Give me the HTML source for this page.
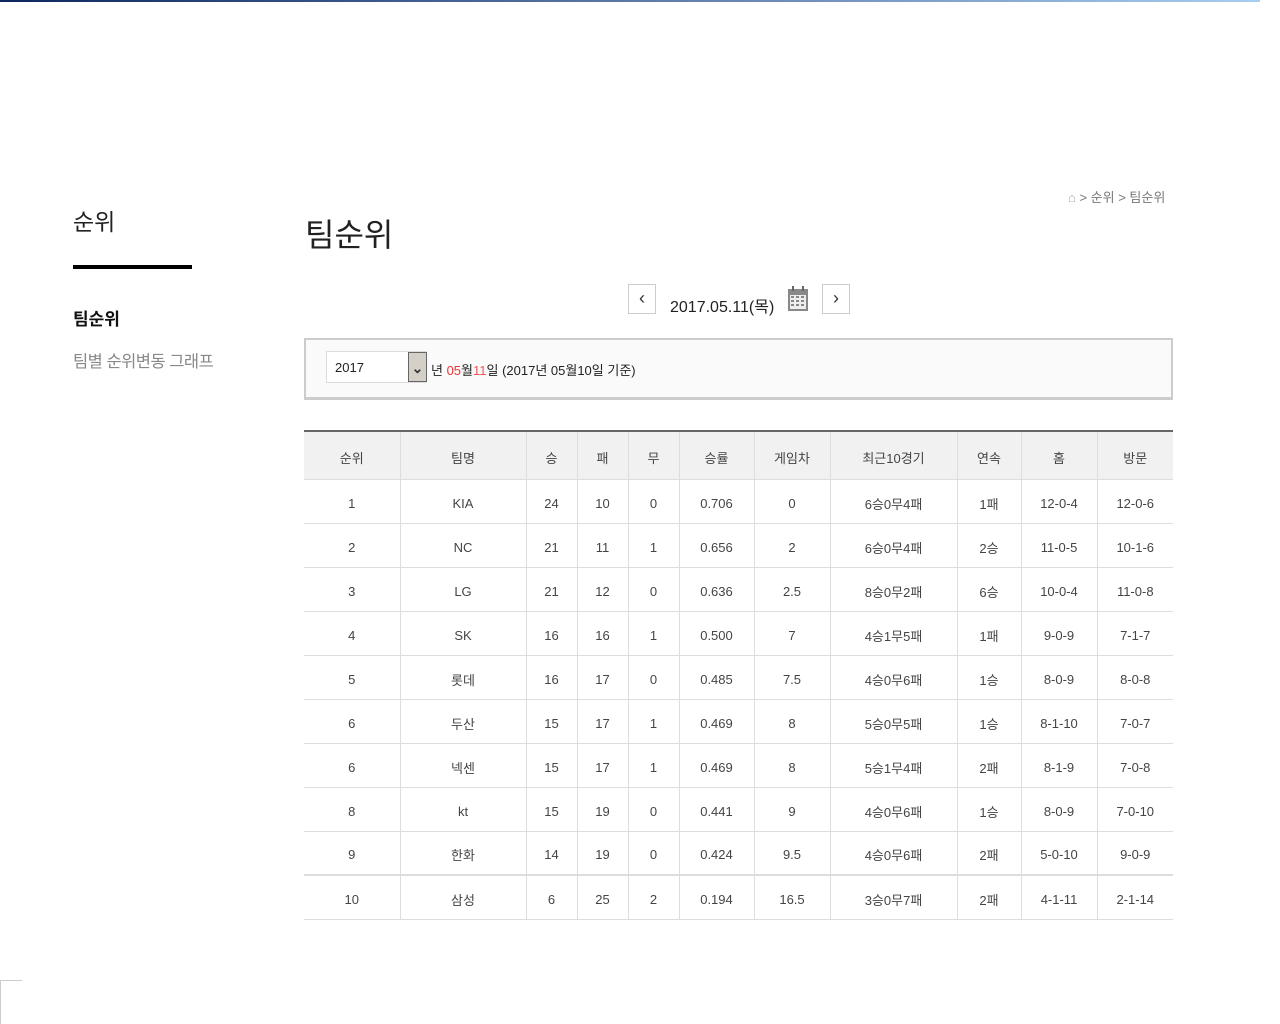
<!DOCTYPE html>
<html><head><meta charset="utf-8"><style>
*{margin:0;padding:0;box-sizing:border-box}
body{width:1280px;height:1024px;background:#fff;font-family:"Liberation Sans","Noto Sans CJK KR",sans-serif;color:#333;position:relative;overflow:hidden}
.top{position:absolute;left:0;top:0;width:1260px;height:2px;background:linear-gradient(90deg,#0f2560,#a8cdf0)}
.abs{position:absolute;white-space:nowrap}
table{position:absolute;left:304px;top:430px;width:869px;border-collapse:collapse;border-top:2px solid #666;font-size:13px;color:#444}
th{height:48px;background:#f1f1f1;font-weight:normal;border-bottom:1px solid #ddd;border-left:1px solid #ddd;padding-top:5px}
td{height:44px;text-align:center;border-bottom:1px solid #ddd;border-left:1px solid #ddd;padding-top:4px}
th:first-child,td:first-child{border-left:none}
.btn{position:absolute;top:284px;width:28px;height:30px;border:1px solid #ccc;font-size:18px;text-align:center;line-height:27px;color:#333}
</style></head><body>
<div class="top"></div>
<div class="abs" style="left:73px;top:203px;font-size:23px;color:#222">순위</div>
<div class="abs" style="left:73px;top:265px;width:119px;height:4px;background:#000"></div>
<div class="abs" style="left:73px;top:305px;font-size:17px;font-weight:bold;color:#111">팀순위</div>
<div class="abs" style="left:73px;top:348px;font-size:16.5px;color:#888;letter-spacing:-0.5px">팀별 순위변동 그래프</div>
<div class="abs" style="left:305px;top:210px;font-size:32px;color:#222">팀순위</div>
<div class="abs" style="left:1068px;top:187px;font-size:13px;color:#777"><span style="color:#aaa">⌂</span> &gt; 순위 &gt; 팀순위</div>
<div class="btn" style="left:628px">‹</div>
<div class="abs" style="left:670px;top:293px;font-size:16px;color:#222">2017.05.11(목)</div>
<svg class="abs" style="left:787px;top:285px" width="22" height="27" viewBox="0 0 22 27"><rect x="1" y="4" width="20" height="22" fill="#888"/><rect x="3" y="10" width="16" height="14" fill="#eee"/><g fill="#888"><rect x="4" y="11" width="3" height="2"/><rect x="9" y="11" width="3" height="2"/><rect x="14" y="11" width="3" height="2"/><rect x="4" y="15" width="3" height="2"/><rect x="9" y="15" width="3" height="2"/><rect x="14" y="15" width="3" height="2"/><rect x="4" y="19" width="3" height="2"/><rect x="9" y="19" width="3" height="2"/><rect x="14" y="19" width="3" height="2"/></g><rect x="5" y="1" width="2" height="5" fill="#666"/><rect x="15" y="1" width="2" height="5" fill="#666"/></svg>
<div class="btn" style="left:822px">›</div>
<div class="abs" style="left:304px;top:338px;width:869px;height:62px;border:2px solid #ccc;border-bottom-width:3px;background:#fafafa"></div>
<div class="abs" style="left:326px;top:351px;width:101px;height:32px;border:1px solid #ddd;background:#fff;font-size:13px;padding:8px 0 0 8px;color:#222">2017</div>
<div class="abs" style="left:408px;top:352px;width:19px;height:30px;background:#d4d0c8;border:1px solid #666;font-size:14px;text-align:center;line-height:30px;font-weight:bold">⌄</div>
<div class="abs" style="left:431px;top:360px;font-size:13px;color:#222">년 <span style="color:#e33">05</span>월<span style="color:#e55">11</span>일 (2017년 05월10일 기준)</div>
<table>
<tr><th style="width:96px">순위</th><th style="width:126px">팀명</th><th style="width:51px">승</th><th style="width:51px">패</th><th style="width:51px">무</th><th style="width:75px">승률</th><th style="width:76px">게임차</th><th style="width:127px">최근10경기</th><th style="width:64px">연속</th><th style="width:76px">홈</th><th>방문</th></tr>
<tr><td>1</td><td>KIA</td><td>24</td><td>10</td><td>0</td><td>0.706</td><td>0</td><td>6승0무4패</td><td>1패</td><td>12-0-4</td><td>12-0-6</td></tr>
<tr><td>2</td><td>NC</td><td>21</td><td>11</td><td>1</td><td>0.656</td><td>2</td><td>6승0무4패</td><td>2승</td><td>11-0-5</td><td>10-1-6</td></tr>
<tr><td>3</td><td>LG</td><td>21</td><td>12</td><td>0</td><td>0.636</td><td>2.5</td><td>8승0무2패</td><td>6승</td><td>10-0-4</td><td>11-0-8</td></tr>
<tr><td>4</td><td>SK</td><td>16</td><td>16</td><td>1</td><td>0.500</td><td>7</td><td>4승1무5패</td><td>1패</td><td>9-0-9</td><td>7-1-7</td></tr>
<tr><td>5</td><td>롯데</td><td>16</td><td>17</td><td>0</td><td>0.485</td><td>7.5</td><td>4승0무6패</td><td>1승</td><td>8-0-9</td><td>8-0-8</td></tr>
<tr><td>6</td><td>두산</td><td>15</td><td>17</td><td>1</td><td>0.469</td><td>8</td><td>5승0무5패</td><td>1승</td><td>8-1-10</td><td>7-0-7</td></tr>
<tr><td>6</td><td>넥센</td><td>15</td><td>17</td><td>1</td><td>0.469</td><td>8</td><td>5승1무4패</td><td>2패</td><td>8-1-9</td><td>7-0-8</td></tr>
<tr><td>8</td><td>kt</td><td>15</td><td>19</td><td>0</td><td>0.441</td><td>9</td><td>4승0무6패</td><td>1승</td><td>8-0-9</td><td>7-0-10</td></tr>
<tr><td>9</td><td>한화</td><td>14</td><td>19</td><td>0</td><td>0.424</td><td>9.5</td><td>4승0무6패</td><td>2패</td><td>5-0-10</td><td>9-0-9</td></tr>
<tr style="border-top:2px solid #ddd"><td>10</td><td>삼성</td><td>6</td><td>25</td><td>2</td><td>0.194</td><td>16.5</td><td>3승0무7패</td><td>2패</td><td>4-1-11</td><td>2-1-14</td></tr>
</table>
<div class="abs" style="left:0;top:980px;width:22px;height:44px;border-left:1px solid #ccc;border-top:1px solid #ccc"></div>
</body></html>
